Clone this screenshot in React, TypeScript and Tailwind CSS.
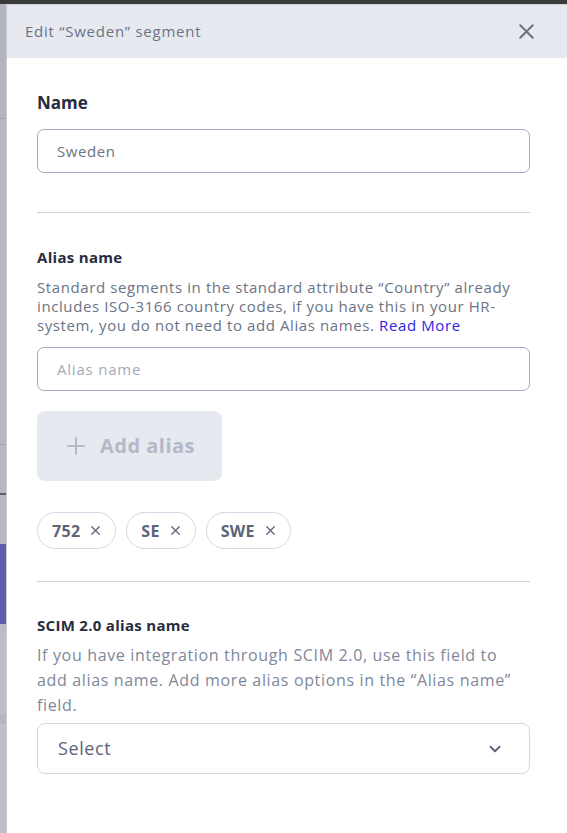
import { useState } from 'react';

const font = { fontFamily: '"Open Sans", "Noto Sans", sans-serif' };

function XIcon({ className }: { className?: string }) {
  return (
    <svg viewBox="0 0 24 24" fill="none" stroke="currentColor" strokeWidth={2} strokeLinecap="round" className={className}>
      <path d="M6 6l12 12M18 6L6 18" />
    </svg>
  );
}

export default function App() {
  const [aliases, setAliases] = useState(['752', 'SE', 'SWE']);

  return (
    <div className="flex flex-col h-[833px] w-[567px] overflow-hidden bg-white" style={font}>
      <div className="h-[4px] bg-[#3a3a3a] shrink-0" />
      <div className="flex flex-1 min-h-0">
        {/* background page peeking out on the left */}
        <div className="w-[7px] shrink-0 flex flex-col bg-[#b6b7c1] border-r border-[#c9cbd3]">
          <div className="h-[114px] bg-[#b3b4bd]" />
          <div className="h-px bg-[#9c9eab]" />
          <div className="h-[325px]" />
          <div className="h-px bg-[#a3a5b0]" />
          <div className="h-[48px]" />
          <div className="h-[2px] bg-[#585b6b]" />
          <div className="h-[49px]" />
          <div className="h-[80px] bg-[#5a5eab]" />
          <div className="h-[10px] bg-[#bbbcc4]" />
          <div className="h-[80px] bg-[#bdbec6]" />
          <div className="h-[10px] bg-[#b4b5be]" />
          <div className="flex-1 bg-[#bfc0c7]" />
        </div>

        <div className="flex-1 flex flex-col">
          <div className="h-[54px] shrink-0 bg-[#e6e9f0] border-t border-[#c8d0e0] flex items-center justify-between pl-[18px] pr-[28px]">
            <span className="text-[15px] tracking-[0.75px] text-[#6b7385]">Edit “Sweden” segment</span>
            <XIcon className="w-[25px] h-[25px] text-[#6b7385]" />
          </div>

          <div className="pl-[30px] pr-[37px] pt-[34px]">
            <h2 className="text-[17px] font-bold text-[#272c40] leading-[22px]">Name</h2>
            <input
              defaultValue="Sweden"
              className="mt-[15px] w-full h-[44px] rounded-[7px] border border-[#a2aabd] px-[19px] text-[15px] tracking-[0.6px] text-[#6b7385] outline-none"
            />

            <div className="mt-[39px] h-px bg-[#ccd0da]" />

            <h3 className="mt-[34px] text-[15px] tracking-[0.3px] font-bold text-[#272c40] leading-[20px]">Alias name</h3>
            <p className="mt-[11px] text-[15px] tracking-[0.6px] leading-[19px] text-[#6b7385]">
              Standard segments in the standard attribute “Country” already includes ISO-3166 country codes, if you have this in your HR-system, you do not need to add Alias names.{' '}
              <a href="#" className="text-[#2d1ee6]">Read More</a>
            </p>
            <input
              placeholder="Alias name"
              className="mt-[12px] w-full h-[44px] rounded-[7px] border border-[#a2aabd] px-[19px] text-[15px] tracking-[0.8px] text-[#6b7385] placeholder:text-[#a3aabb] outline-none"
            />

            <button className="mt-[20px] w-[185px] h-[70px] rounded-[8px] bg-[#e6e9f0] flex items-center justify-center gap-[12px] text-[20px] tracking-[0.5px] font-bold text-[#b4b9c8]">
              <svg viewBox="0 0 24 24" fill="none" stroke="currentColor" strokeWidth={2} strokeLinecap="round" className="w-[24px] h-[24px]">
                <path d="M12 4v16M4 12h16" />
              </svg>
              Add alias
            </button>

            <div className="mt-[31px] flex gap-[10px]">
              {aliases.map((a) => (
                <span
                  key={a}
                  className="h-[37px] rounded-full border border-[#d4d8e6] pl-[14px] pr-[12px] flex items-center gap-[8px] text-[16px] tracking-[0.3px] font-bold text-[#5d6478]"
                >
                  {a}
                  <button onClick={() => setAliases(aliases.filter((x) => x !== a))}>
                    <XIcon className="w-[15px] h-[15px] text-[#5d6478]" />
                  </button>
                </span>
              ))}
            </div>

            <div className="mt-[32px] h-px bg-[#ccd0da]" />

            <h3 className="mt-[33px] text-[15px] tracking-[0.3px] font-bold text-[#272c40] leading-[20px]">SCIM 2.0 alias name</h3>
            <p className="mt-[8px] text-[16px] leading-[25px] tracking-[0.65px] text-[#80879a]">
              If you have integration through SCIM 2.0, use this field to add alias name. Add more alias options in the “Alias name” field.
            </p>
            <div className="mt-[5px] h-[51px] rounded-[8px] border border-[#d4d8e6] flex items-center justify-between pl-[20px] pr-[25px]">
              <span className="text-[18px] tracking-[0.6px] text-[#5d6478]">Select</span>
              <svg viewBox="0 0 24 24" fill="none" stroke="#5d6478" strokeWidth={2.5} strokeLinecap="round" strokeLinejoin="round" className="w-[18px] h-[18px]">
                <path d="M6 9l6 6 6-6" />
              </svg>
            </div>
          </div>
        </div>
      </div>
    </div>
  );
}
